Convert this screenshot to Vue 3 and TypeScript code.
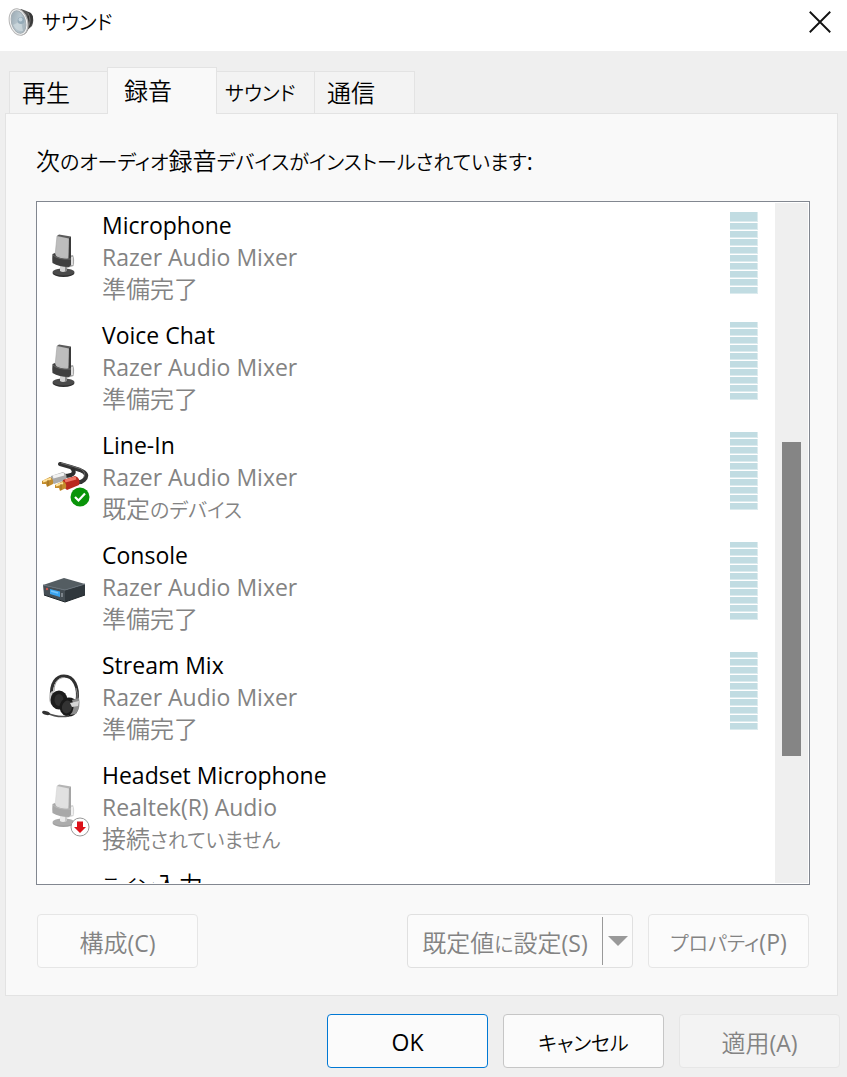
<script setup lang="ts">
import { h, ref, type FunctionalComponent } from 'vue'

type IconName = 'mic' | 'line' | 'console' | 'headset' | 'mic-off'

interface Device {
  name: string
  source?: string
  status?: string
  icon?: IconName
  meter: boolean
}

// Kana are set a little smaller than kanji, as in a compact UI typeface,
// and Latin runs take the regular weight.
function runClass(run: string): string | undefined {
  if (/[\u3040-\u30ff]/.test(run)) return 'kana'
  if (/[ -~]/.test(run)) return 'latin'
  return undefined
}

const UiText: FunctionalComponent<{ text: string }> = (props) =>
  h(
    'span',
    props.text
      .split(/([\u3040-\u30ff]+|[ -~]+)/)
      .filter(Boolean)
      .map((run) => h('span', { class: runClass(run) }, run)),
  )
UiText.props = ['text']

const tabs = ['再生', '録音', 'サウンド', '通信']
const activeTab = ref('録音')

const devices: Device[] = [
  { name: 'Microphone', source: 'Razer Audio Mixer', status: '準備完了', icon: 'mic', meter: true },
  { name: 'Voice Chat', source: 'Razer Audio Mixer', status: '準備完了', icon: 'mic', meter: true },
  { name: 'Line-In', source: 'Razer Audio Mixer', status: '既定のデバイス', icon: 'line', meter: true },
  { name: 'Console', source: 'Razer Audio Mixer', status: '準備完了', icon: 'console', meter: true },
  { name: 'Stream Mix', source: 'Razer Audio Mixer', status: '準備完了', icon: 'headset', meter: true },
  { name: 'Headset Microphone', source: 'Realtek(R) Audio', status: '接続されていません', icon: 'mic-off', meter: false },
  { name: 'ライン入力', meter: false },
]
</script>

<template>
  <div class="dialog">
    <header class="titlebar">
      <svg class="speaker" viewBox="0 0 26 30" aria-hidden="true">
        <defs>
          <linearGradient id="cone" x1="0" y1="0" x2="1" y2="1">
            <stop offset="0" stop-color="#93a3ad" />
            <stop offset="0.5" stop-color="#b9c7cf" />
            <stop offset="1" stop-color="#9dacb5" />
          </linearGradient>
        </defs>
        <path d="M13 2 Q19 4 23 6 Q27 12 24 19 Q19 23 15 28z" fill="#555" />
        <path d="M20 5q6 2 5 8t-6 9" fill="#383838" />
        <path d="M20 6q4 7 0 15" fill="none" stroke="#777" />
        <ellipse cx="11.500" cy="15" rx="9" ry="13.500" transform="rotate(-15 11.500 15)" fill="#777" />
        <ellipse cx="10.500" cy="15" rx="9" ry="13.500" transform="rotate(-15 10.500 15)" fill="#f6f6f6" stroke="#b5b5b5" />
        <ellipse cx="10.500" cy="15" rx="7" ry="11.500" transform="rotate(-15 10.500 15)" fill="url(#cone)" stroke="#a3adb3" />
        <path d="M5 18L13 14L15 24Q9 25 5 18z" fill="#d0dbe0" opacity=".7" />
        <circle cx="13" cy="13.500" r="3.500" fill="#95abb8" />
        <circle cx="12.500" cy="12.500" r="2" fill="#c4d4dd" />
      </svg>
      <h1><UiText text="サウンド" /></h1>
      <button class="close" type="button" aria-label="閉じる">
        <svg viewBox="0 0 20 20" aria-hidden="true"><path d="M.7.7L19.300 19.300M19.300.7L.7 19.300" stroke="#111" stroke-width="1.700" fill="none" /></svg>
      </button>
    </header>

    <main class="body">
      <div class="tabs" role="tablist">
        <button
          v-for="tab in tabs"
          :key="tab"
          type="button"
          role="tab"
          class="tab"
          :class="{ active: tab === activeTab }"
          :aria-selected="tab === activeTab"
          @click="activeTab = tab"
        ><UiText :text="tab" /></button>
      </div>

      <section class="panel" role="tabpanel">
        <p id="list-label" class="intro"><UiText text="次のオーディオ録音デバイスがインストールされています:" /></p>

        <div class="listbox">
          <ul class="devices" aria-labelledby="list-label">
            <li v-for="(device, index) in devices" :key="index" class="device">
              <div class="icon">
                <svg v-if="device.icon === 'mic' || device.icon === 'mic-off'" class="picture" viewBox="0 0 52 60" :class="{ faded: device.icon === 'mic-off' }" aria-hidden="true">
                  <ellipse cx="26.500" cy="49" rx="11" ry="4" fill="#2f2f2f" />
                  <ellipse cx="26.500" cy="48" rx="11" ry="3.500" fill="#4a4a4a" />
                  <path d="M23 41h6v6q-3 2-6 0z" fill="#d2d2d2" />
                  <path d="M28 42h2v5l-2 1z" fill="#8a8a8a" />
                  <path d="M30 32L36 31Q38 36 36.500 42L30 44z" fill="#a9a9a9" />
                  <path d="M34.500 33v8" stroke="#dedede" stroke-width="3" />
                  <path d="M20 12L32 14 31.500 35 18 32z" fill="#bdbdbd" stroke="#a2a2a2" stroke-width=".6" />
                  <path d="M20 12L22 10.500 34 12.500 32 14.500z" fill="#5c5c5c" />
                  <path d="M32 14L34 12.500 34 35 31.500 35z" fill="#3a3a3a" />
                  <path d="M15.500 30Q15 35 15.500 39Q22 43 32 43L34 41V34L30 35Q22 34 19 32L18 29z" fill="#3f3f3f" />
                  <path d="M16 31Q21 36 34 35" fill="none" stroke="#666" />
                </svg>

                <svg v-else-if="device.icon === 'line'" class="picture" viewBox="0 0 52 60" aria-hidden="true">
                  <g transform="translate(1 2)">
                    <path d="M22 18Q33 21 42 24Q52 28 46 34Q43 37 38 36" fill="none" stroke="#343434" stroke-width="4" stroke-linecap="round" />
                    <path d="M34 22Q38 27 33 29Q30 30 26 30" fill="none" stroke="#2d2d2d" stroke-width="4" />
                    <path d="M23 17Q34 20 43 23Q48 26 46 31" fill="none" stroke="#6b6b6b" />
                    <path d="M13 30L25 26Q30 28 28 34L16 38Q11 36 13 30z" fill="#a9a9a9" />
                    <path d="M15 31L26 28" stroke="#f2f2f2" stroke-width="3" />
                    <path d="M4 35L8 33 12 31Q16 33 15 38L9 41 8 38 4 38z" fill="#c18a2b" />
                    <path d="M5 35.500L13 32.500" stroke="#ffe29a" stroke-width="2" />
                    <path d="M10 34v6" stroke="#946a25" />
                    <path d="M25 34L37 30Q43 32 41 39L29 44Q24 41 25 34z" fill="#b92a1f" />
                    <path d="M27 35L38 32" stroke="#ef7765" stroke-width="3" />
                    <path d="M17 39L21 37 25 35Q29 37 28 42L22 45 21 42 17 42z" fill="#c58c2b" />
                    <path d="M18 39.500L25 37" stroke="#ffe69f" stroke-width="2" />
                    <path d="M23 38v6" stroke="#946a25" />
                  </g>
                </svg>

                <svg v-else-if="device.icon === 'console'" class="picture" viewBox="0 0 52 60" aria-hidden="true">
                  <g transform="translate(1 2)">
                    <path d="M5 29L26 22 47 28 27 34z" fill="#545d62" />
                    <path d="M5 29L27 34V46L6 39z" fill="#454e54" />
                    <path d="M27 34L47 28V39L27 46z" fill="#30383d" />
                    <path d="M5 29L27 34L47 28" fill="none" stroke="#68727a" />
                    <path d="M12 33L22 35.500V41L12 38z" fill="#3aa4f0" />
                    <path d="M13 35L20 37" stroke="#78c5fb" stroke-width="1.500" />
                    <circle cx="9" cy="33" r="1.200" fill="#c9544c" />
                    <path d="M24 37v4" stroke="#8f979c" stroke-width="1.500" />
                    <path d="M6 39L27 46 47 39" fill="none" stroke="#20272b" />
                  </g>
                </svg>

                <svg v-else-if="device.icon === 'headset'" class="picture" viewBox="0 0 52 60" aria-hidden="true">
                  <path d="M14.500 35C13 18 20 12 27 12C37 12 42 23 40 37" fill="none" stroke="#303030" stroke-width="3" />
                  <path d="M17 27C17 18 22 13 28 13.500" fill="none" stroke="#999" />
                  <path d="M39 24Q41 29 40 35" fill="none" stroke="#8a8a8a" />
                  <ellipse cx="16" cy="34" rx="4" ry="7" fill="#c6c6c6" />
                  <ellipse cx="22" cy="36" rx="8.500" ry="9.500" fill="#1c1c1c" />
                  <ellipse cx="22" cy="36" rx="4.500" ry="6" fill="#303030" />
                  <ellipse cx="32" cy="43" rx="9.500" ry="9.500" transform="rotate(15 32 43)" fill="#1a1a1a" />
                  <ellipse cx="30" cy="43" rx="5" ry="6.500" transform="rotate(15 30 43)" fill="#333" />
                  <path d="M35 36L42 34Q44 43 39 50L33 51Q39 45 35 36z" fill="#8d8d8d" />
                  <path d="M33 39L42 37 41 42 35 43z" fill="#d6d6d6" />
                  <path d="M32 52Q20 54 10 49" fill="none" stroke="#505050" stroke-width="1.500" />
                  <ellipse cx="9" cy="49" rx="4" ry="1.800" transform="rotate(15 9 49)" fill="#333" />
                </svg>

                <svg v-if="device.icon === 'line'" class="badge" viewBox="0 0 20 20" aria-label="既定">
                  <circle cx="10" cy="10" r="9.500" fill="#099409" />
                  <path d="M5 10l3.500 3.500L15 6.500" fill="none" stroke="#fff" stroke-width="2.200" />
                </svg>
                <svg v-if="device.icon === 'mic-off'" class="badge" viewBox="0 0 20 20" aria-label="未接続">
                  <circle cx="10" cy="10" r="9" fill="#fff" stroke="#999" />
                  <path d="M7 4.500h6V10h3l-6 6-6-6h3z" fill="#dc1119" />
                </svg>
              </div>
              <div class="text">
                <div class="name"><UiText :text="device.name" /></div>
                <div v-if="device.source" class="detail"><UiText :text="device.source" /></div>
                <div v-if="device.status" class="detail"><UiText :text="device.status" /></div>
              </div>
              <div v-if="device.meter" class="meter" :class="{ tall: index === 0 }">
                <span v-for="bar in 10" :key="bar" class="bar"></span>
              </div>
            </li>
          </ul>
          <div class="scrollbar" aria-hidden="true"><div class="thumb"></div></div>
        </div>

        <div class="actions">
          <button type="button" class="btn" disabled><UiText text="構成(C)" /></button>
          <div class="split">
            <button type="button" class="split-main" disabled><UiText text="既定値に設定(S)" /></button>
            <button type="button" class="split-arrow" aria-label="既定値のオプション" disabled>
              <svg viewBox="0 0 20 10" aria-hidden="true"><path d="M0 0h20L10 10z" fill="#999" /></svg>
            </button>
          </div>
          <button type="button" class="btn" disabled><UiText text="プロパティ(P)" /></button>
        </div>
      </section>

      <footer class="footer">
        <button type="button" class="btn primary"><UiText text="OK" /></button>
        <button type="button" class="btn"><UiText text="キャンセル" /></button>
        <button type="button" class="btn" disabled><UiText text="適用(A)" /></button>
      </footer>
    </main>
  </div>
</template>

<style>
body {
  background: #efefef;
}
.kana {
  font-size: 20px;
}
.latin {
  font-size: 23px;
  font-weight: 400;
}
</style>

<style scoped>
.dialog,
.dialog button {
  font-family: "Open Sans", "Noto Sans CJK JP", sans-serif;
  font-size: 24px;
  font-weight: 350;
  font-feature-settings: "palt";
}
.dialog {
  color: #000;
  line-height: 32px;
}
.dialog * {
  box-sizing: border-box;
}
.titlebar {
  display: flex;
  align-items: center;
  height: 51px;
  padding: 0 16px 8px 8px;
  background: #fff;
}
.speaker {
  width: 26px;
  height: 30px;
}
h1 {
  margin: 0 auto 0 8px;
  font-size: 24px;
  font-weight: 350;
}
.close {
  display: flex;
  padding: 0;
  border: 0;
  background: none;
}
.close svg {
  width: 22px;
  height: 22px;
}
.body {
  padding: 16px 7px 9px 5px;
}
.tabs {
  display: flex;
  align-items: flex-end;
  padding-left: 4px;
}
.tab {
  width: 98px;
  height: 42px;
  padding: 0 0 2px 12px;
  border: 1px solid #e3e3e3;
  border-width: 1px 0 0 1px;
  background: #f3f3f3;
  color: #000;
  text-align: left;
  white-space: nowrap;
}
.tab:nth-child(3) {
  padding-left: 8px;
}
.tab:last-child {
  width: 101px;
  border-right-width: 1px;
}
.tab.active {
  z-index: 1;
  width: 110px;
  height: 47px;
  margin: 0 -1px -1px 0;
  padding: 0 0 4px 16px;
  border-right-width: 1px;
  background: #f9f9f9;
}
.panel {
  margin-right: 2px;
  padding: 31px 27px 27px 30px;
  border: 1px solid #e3e3e3;
  background: #f9f9f9;
}
.intro {
  height: 32px;
  margin: 0 0 24px;
}
.listbox {
  display: flex;
  height: 684px;
  padding: 1px 1px 1px 0;
  border: 1px solid #828790;
  background: #fff;
}
.devices {
  flex: 1;
  margin: 0;
  padding: 6px 0 0;
  overflow: hidden;
  list-style: none;
}
.device {
  display: flex;
  height: 110px;
  padding: 0 17px 0 0;
}
.icon {
  position: relative;
  width: 53px;
  height: 60px;
  margin-top: 15px;
}
.picture {
  display: block;
  width: 52px;
  height: 60px;
}
.faded {
  opacity: .45;
}
.badge {
  position: absolute;
  right: 0;
  bottom: -3px;
  width: 20px;
  height: 20px;
}
.text {
  flex: 1;
  margin-left: 12px;
}
.text > div {
  height: 32px;
}
.detail {
  color: #838383;
}
.meter {
  display: flex;
  flex-direction: column;
  gap: 1px;
  width: 28px;
  margin-top: 3px;
}
.bar {
  height: 7px;
  border: solid #dcebee;
  border-width: 0 1px 1px 0;
  background: #c1dce2;
}
.bar:first-child {
  height: 6px;
}
.tall .bar:first-child {
  height: 10px;
}
.scrollbar {
  width: 33px;
  padding: 239px 7px 0;
  background: #efefef;
}
.thumb {
  height: 314px;
  background: #858585;
}
.actions {
  display: flex;
  gap: 15px;
  margin-top: 29px;
  padding: 0 1px;
}
.actions > :first-child {
  margin-right: auto;
}
.btn {
  width: 161px;
  height: 54px;
  padding: 0;
  border: 1px solid #c6c6c6;
  border-radius: 4px;
  background: #fbfbfb;
  color: #000;
}
.btn:disabled {
  border-color: #e6e6e6;
  color: #838383;
}
.btn.primary {
  border-color: #0078d4;
}
.split {
  display: flex;
  align-items: center;
  width: 226px;
  height: 54px;
  border: 1px solid #e0e0e0;
  border-radius: 4px;
  background: #fbfbfb;
}
.split button {
  height: 48px;
  padding: 0;
  border: 0;
  background: none;
  color: #838383;
}
.split .split-main {
  flex: 1;
  white-space: nowrap;
}
.split .split-arrow {
  display: flex;
  align-items: center;
  justify-content: center;
  width: 30px;
  border-left: 1px solid #999;
}
.split-arrow svg {
  width: 20px;
  height: 10px;
}
.footer {
  display: flex;
  justify-content: flex-end;
  gap: 15px;
  margin-top: 18px;
}
.footer .btn:disabled {
  background: #f3f3f3;
}
</style>
